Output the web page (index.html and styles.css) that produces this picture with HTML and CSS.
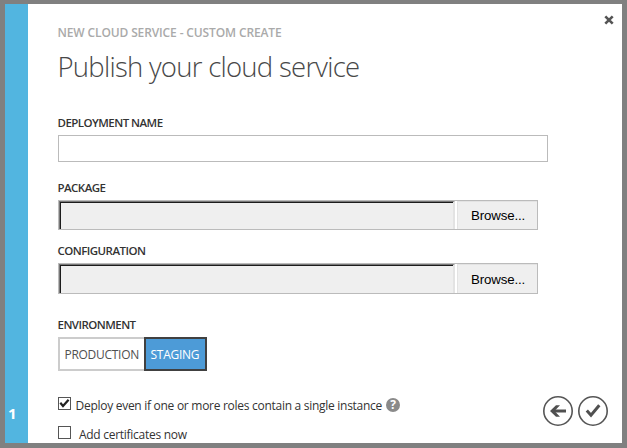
FILE: index.html
```html
<!DOCTYPE html>
<html lang="en">
<head>
<meta charset="utf-8">
<title>Publish your cloud service</title>
<link rel="stylesheet" href="styles.css">
</head>
<body>
<main class="dialog">
  <aside class="steps"><span>1</span></aside>
  <form class="content">
    <button class="close" type="button" aria-label="Close"><svg width="10" height="10" viewBox="0 0 10 10"><path d="M1.3 1.3 8.7 8.7M8.7 1.3 1.3 8.7"/></svg></button>
    <div class="kicker"><span>NEW CLOUD SERVICE - CUSTOM CREATE</span></div>
    <h1><span>Publish your cloud service</span></h1>
    <label class="label label-name"><span>DEPLOYMENT NAME</span></label>
    <div class="text-input"></div>
    <label class="label label-package"><span>PACKAGE</span></label>
    <div class="file"><div class="path"></div><div class="browse">Browse...</div></div>
    <label class="label label-config"><span>CONFIGURATION</span></label>
    <div class="file file-config"><div class="path"></div><div class="browse">Browse...</div></div>
    <label class="label label-env"><span>ENVIRONMENT</span></label>
    <div class="toggle"><div class="option production"><span>PRODUCTION</span></div><div class="option staging"><span>STAGING</span></div></div>
    <div class="footer">
      <div class="checks">
        <div class="check">
          <i class="box"><svg width="11" height="11" viewBox="0 0 11 11"><path d="M1.3 4.8 4 8 9.6 1.8"/></svg></i>
          <span class="deploy-text">Deploy even if one or more roles contain a single instance</span>
          <i class="help">?</i>
        </div>
        <div class="check second"><i class="box"></i><span class="cert-text">Add certificates now</span></div>
      </div>
      <div class="nav">
        <svg width="30" height="30" viewBox="0 0 30 30"><circle cx="15" cy="15" r="14.2"/><path class="arrow" d="M23 15H9"/><path class="head" d="M13 9.2h4L11.5 15l5.5 5.8h-4L7 15z"/></svg>
        <svg width="30" height="30" viewBox="0 0 30 30"><circle cx="15" cy="15" r="14.2"/><path class="tick" d="M8.8 14.5 13 19.3 21.3 9.3"/></svg>
      </div>
    </div>
  </form>
</main>
</body>
</html>
```
FILE: styles.css
```css
* { box-sizing: border-box; }
html, body { height: 100%; }
body {
  margin: 0;
  padding: 4px 5px 5px;
  overflow: hidden;
  background: #808080;
  color: #333;
  font: 12px/16px "Open Sans", "Noto Sans", sans-serif;
}
.dialog { display: flex; height: 439px; background: #fff; }
.steps {
  width: 23px;
  padding: 399px 0 0 3px;
  background: #52b5e0;
  color: #fff;
  font-size: 15px;
  font-weight: 700;
  line-height: 20px;
}
.content { position: relative; flex: 1; padding: 20px 14px 0 30px; white-space: nowrap; }
.close { position: absolute; top: 11px; right: 8px; width: 10px; height: 10px; padding: 0; border: 0; background: none; }
svg { display: block; fill: none; stroke: #555; }
.close svg { stroke-width: 2.6; }
.kicker { height: 18px; margin-left: -.5px; color: #aaa; font-weight: 600; line-height: 18px; letter-spacing: -.13px; }
h1 { height: 40px; margin: 5px 0 0 -.5px; color: #484848; font-size: 27.5px; font-weight: 300; line-height: 40px; letter-spacing: -.73px; }
.label { display: block; height: 16px; margin-left: -.5px; font-size: 11.5px; font-weight: 600; letter-spacing: -.54px; }
.label-name { margin-top: 28px; }
.text-input { width: 490px; height: 27px; margin-top: 4px; border: 1px solid #bbb; }
.label-package { margin-top: 18px; }
.file { display: flex; width: 480px; height: 30px; margin-top: 4px; border: 1px solid #bbb; }
.path { width: 396px; margin-right: 2px; background: #efefef; border: solid; border-width: 1px 2px 0 1px; border-color: #777 #e3e3e3 #fff #777; box-shadow: inset 1px 1px #1c1c1c; }
.browse { flex: 1; padding-left: 13px; background: #efefef; border: solid #e3e3e3; border-width: 1px 0 0 1px; color: #000; font: 13.3px/27px "Liberation Sans", sans-serif; letter-spacing: -.15px; }
.label-config { margin-top: 13px; }
.file-config { height: 31px; }
.file-config .browse { line-height: 29px; }
.label-env { margin-top: 23px; }
.toggle { display: flex; margin-top: 4px; height: 34px; }
.option { height: 34px; border: 2px solid #ccc; padding-left: 4.5px; font-size: 12px; line-height: 31px; color: #505050; letter-spacing: -.28px; }
.production { width: 86px; border-right: 0; }
.staging { width: 63px; border-color: #404040; background: #4d9bd7; color: #fff; }
.footer { display: flex; justify-content: space-between; margin-top: 25px; }
.check { display: flex; height: 18px; letter-spacing: -.28px; }
.second { margin-top: 11px; }
.box { width: 13px; height: 13px; margin-top: 1px; border: 1px solid #555; }
.box svg { stroke: #222; stroke-width: 2.2; }
.check span { line-height: 20px; }
.deploy-text { margin-left: 4.5px; }
.cert-text { margin-left: 8px; }
.help { width: 14px; height: 14px; margin: 2px 0 0 4px; border-radius: 50%; background: #8a8a8a; color: #fff; font-size: 12px; font-style: normal; font-weight: 700; line-height: 14px; text-align: center; letter-spacing: 0; }
.nav { display: flex; gap: 5px; }
.nav svg circle { stroke-width: 1.6; }
.arrow, .tick { stroke: #505050; stroke-width: 3; }
.head { fill: #505050; stroke: none; }
```
